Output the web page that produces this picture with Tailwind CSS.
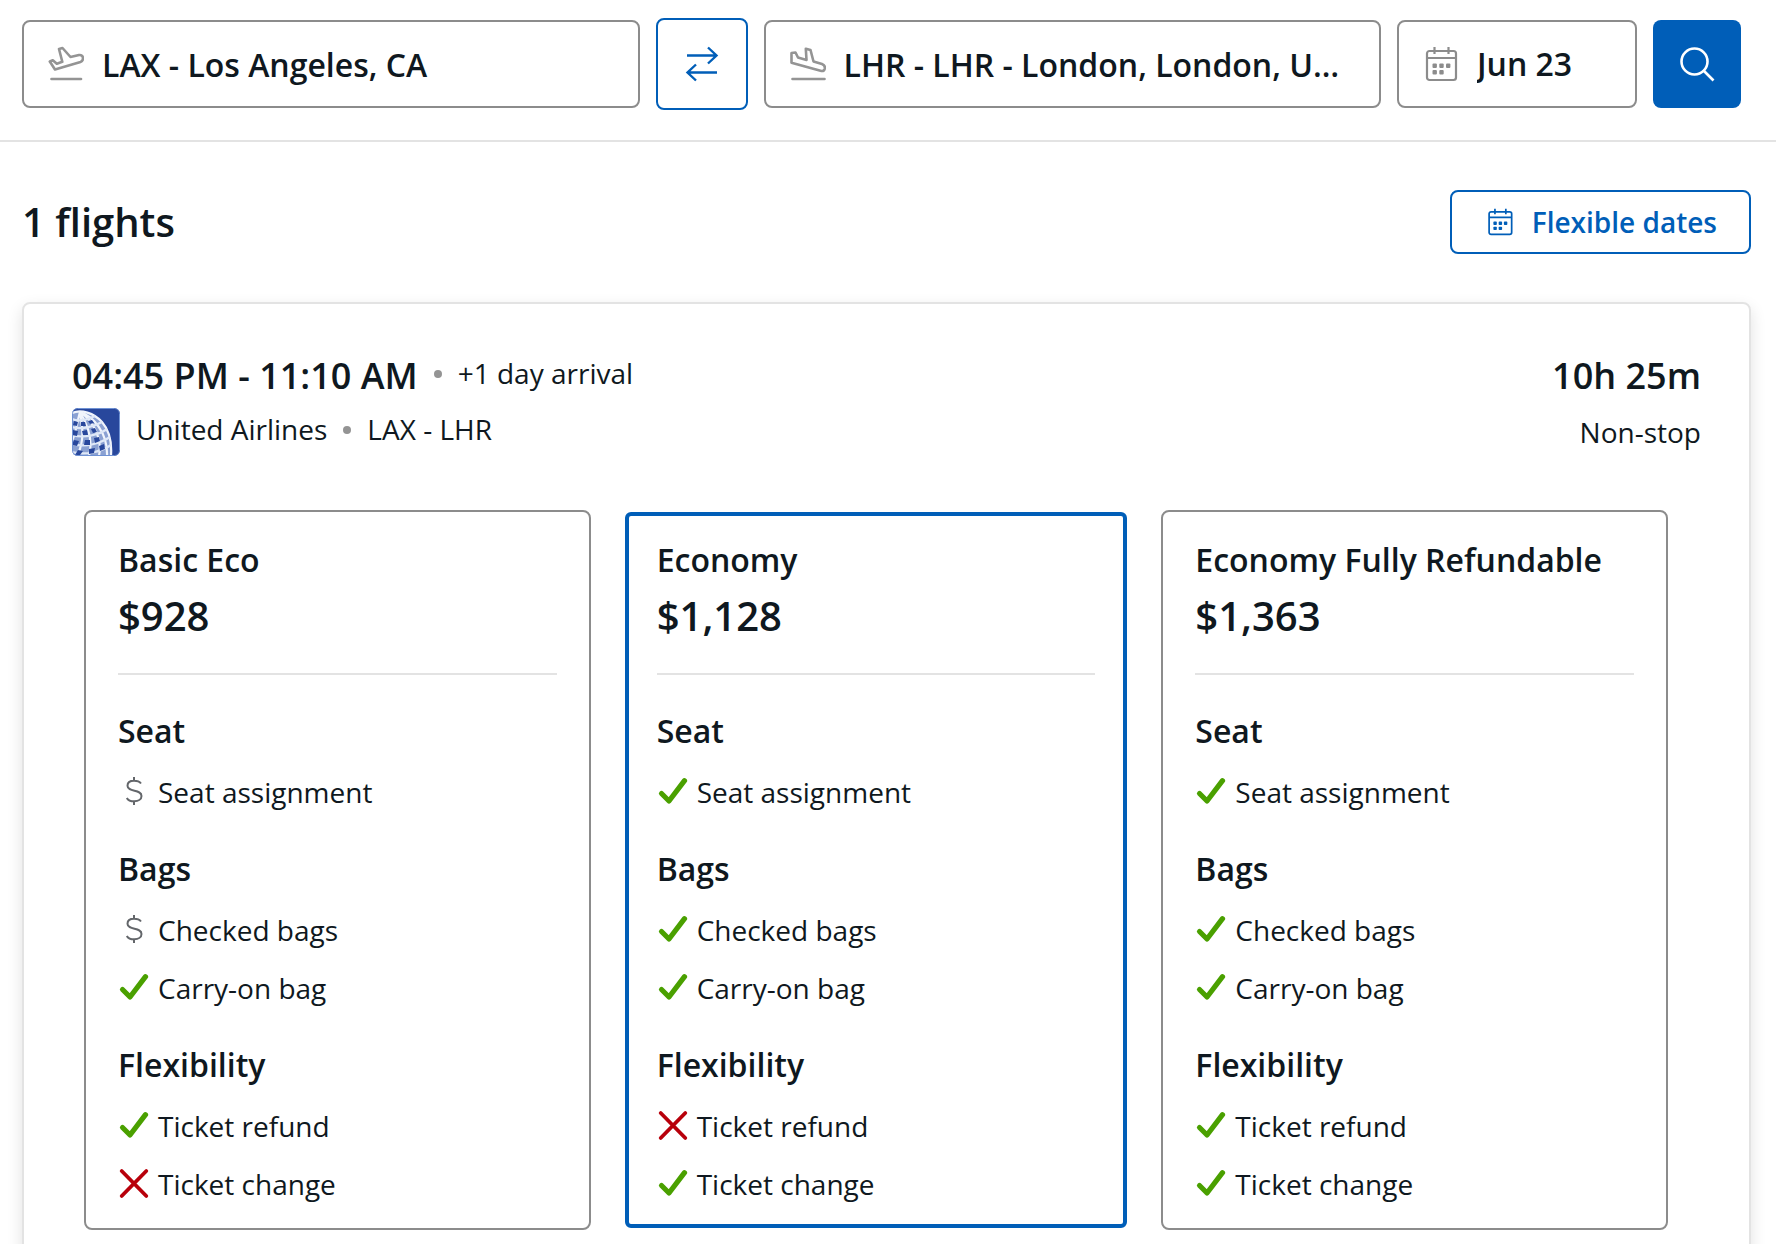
<!DOCTYPE html>
<html lang="en">
<head>
    <meta charset="UTF-8">
    <meta name="viewport" content="width=device-width, initial-scale=1.0">
    <title>Flight Search Results</title>
    <script src="https://cdn.jsdelivr.net/npm/@tailwindcss/browser@4"></script>
</head>
<body class="bg-white text-[#0f1820] text-[28px] font-['Open_Sans',sans-serif]">
    <!-- Icons -->
    <svg class="hidden" aria-hidden="true">
        <symbol id="check" viewBox="0 0 32 32">
            <path d="M4.500 17.500 12 25 27.500 4.700" fill="none" stroke="#4aa000" stroke-width="5.200" stroke-linecap="round" stroke-linejoin="round"/>
        </symbol>
        <symbol id="cross" viewBox="0 0 32 32">
            <path d="M3.700 3 28.300 28M28.300 3 3.700 28" fill="none" stroke="#b8000b" stroke-width="3.800" stroke-linecap="round"/>
        </symbol>
        <symbol id="dollar" viewBox="0 0 32 32">
            <path d="M16 1v4M16 25v4M23 7.500C21.500 5.500 19 4.800 16 4.800c-4 0-6.500 2-6.500 4.900 0 6.800 14 3.400 14 10.200 0 3.200-3 5.400-7.200 5.400-3.300 0-6.300-1.200-7.500-3.400" fill="none" stroke="#63666a" stroke-width="2"/>
        </symbol>
        <symbol id="calendar" viewBox="0 0 36 36">
            <g fill="none" stroke="currentColor" stroke-width="2.200">
                <rect x="4" y="5" width="29" height="29" rx="2.500"/>
                <path d="M4 12h29M11.500 1v7M25.500 1v7"/>
            </g>
            <g fill="currentColor">
                <rect x="9.500" y="17.500" width="4.400" height="4.400" rx="1"/>
                <rect x="16.300" y="17.500" width="4.400" height="4.400" rx="1"/>
                <rect x="23" y="17.500" width="4.400" height="4.400" rx="1"/>
                <rect x="9.500" y="24" width="4.400" height="4.400" rx="1"/>
                <rect x="16.300" y="24" width="4.400" height="4.400" rx="1"/>
            </g>
        </symbol>
    </svg>

    <!-- Search Bar -->
    <header class="border-b-2 border-[#e3e3e3]">
        <form class="flex items-center gap-4 pl-[22px] pr-[35px] pt-[18px] pb-[30px] text-[32px] font-semibold">
            <label class="flex flex-1 min-w-0 items-center gap-[18px] h-[88px] px-6 border-2 border-[#8c8c8c] rounded-lg">
                <svg class="w-9 h-9 shrink-0 text-[#949494]" viewBox="0 0 36 36" fill="none" stroke="currentColor" stroke-width="2.600" stroke-linecap="round" stroke-linejoin="round">
                    <path d="M11 3 14.500 2 22.500 11 31 9C33.500 8.700 35 10 35 12.300 35 14.200 34.500 15.200 32.500 15.900L7 23.500 1.800 15.500 4.800 14.300 8.800 17.800 14.300 15.800Z"/>
                    <path d="M3.500 33h29.500"/>
                </svg>
                <input type="text" aria-label="From" value="LAX - Los Angeles, CA" class="w-full min-w-0 pt-[2px] outline-none text-ellipsis">
            </label>
            <button type="button" aria-label="Swap airports" class="flex items-center justify-center w-[92px] h-[92px] border-2 border-[#005eb8] rounded-lg text-[#005eb8]">
                <svg class="w-9 h-9" viewBox="0 0 36 36" fill="none" stroke="currentColor" stroke-width="2.400">
                    <path d="M3 9.500h29.500M24 1.500l8.500 8-8.500 8M33 26.500H3.500M12 18.500l-8.500 8 8.500 8"/>
                </svg>
            </button>
            <label class="flex flex-1 min-w-0 items-center gap-[18px] h-[88px] px-6 border-2 border-[#8c8c8c] rounded-lg">
                <svg class="w-9 h-9 shrink-0 text-[#949494]" viewBox="0 0 36 36" fill="none" stroke="currentColor" stroke-width="2.600" stroke-linecap="round" stroke-linejoin="round">
                    <path d="M1.500 7 5.500 6.500 8 11.500 16.500 14 15.800 2.700 20.500 4 23.500 15.500 32 18C34.500 19 35.300 20.500 34.700 22.800 34 25 32.500 25.400 30.500 24.800L1.500 16.800Z"/>
                    <path d="M2.500 33h32"/>
                </svg>
                <input type="text" aria-label="To" value="LHR - LHR - London, London, United Kingdom" class="w-full min-w-0 pt-[2px] pr-3 outline-none text-ellipsis">
            </label>
            <label class="flex items-center gap-[18px] w-[240px] h-[88px] px-6 border-2 border-[#8c8c8c] rounded-lg">
                <svg class="w-9 h-9 shrink-0 text-[#8c8c8c]"><use href="#calendar"/></svg>
                <input type="text" aria-label="Departure date" value="Jun 23" class="w-full min-w-0 outline-none">
            </label>
            <button type="submit" aria-label="Search" class="flex items-center justify-center w-[88px] h-[88px] bg-[#005eb8] rounded-lg text-white">
                <svg class="w-9 h-9" viewBox="0 0 36 36" fill="none" stroke="currentColor" stroke-width="2.600">
                    <circle cx="15.500" cy="15.500" r="13"/>
                    <path d="M24.500 24.500 34.500 34.500"/>
                </svg>
            </button>
        </form>
    </header>

    <main class="pl-[22px] pr-[25px] py-12">
        <div class="flex items-center justify-between mb-12">
            <h1 class="text-[40px] font-semibold">1 flights</h1>
            <button type="button" class="flex items-center gap-4 h-16 px-8 border-2 border-[#005eb8] rounded-lg text-[#005eb8] font-semibold">
                <svg class="w-8 h-8 p-[2px]"><use href="#calendar"/></svg>
                Flexible dates
            </button>
        </div>

        <!-- Flight Card -->
        <article class="border-2 border-[#e3e3e3] rounded-lg shadow-[0_6px_16px_rgba(0,0,0,0.12)] px-12 pt-[46px] pb-12">
            <div class="flex justify-between">
                <div>
                    <div class="flex items-start gap-4">
                        <h2 class="text-[36px] leading-[52px] font-semibold">04:45 PM - 11:10 AM</h2>
                        <span class="w-2 h-2 mt-5 rounded-full bg-[#949494]"></span>
                        <span class="leading-[46px]">+1 day arrival</span>
                    </div>
                    <div class="flex items-start gap-4 mt-[6px]">
                        <svg class="w-12 h-12 rounded-md" viewBox="0 0 48 48" fill="none">
                            <rect width="48" height="48" fill="#28479c"/>
                            <path d="M0 5C9 1 22 5 30 14C37 22 40 34 39 48H0Z" fill="#8ba1d2"/>
                            <g stroke="#f1f5fc" stroke-width="2.200">
                                <path d="M0 5C9 1 22 5 30 14C37 22 40 34 39 48"/>
                                <path d="M8 4C21 8 36 25 35 48M8 4C18 10 31 28 27 48M8 4C14 14 22 30 17 48M8 4C10 17 13 31 6 46M8 4C5 14 4 25 0 33"/>
                            </g>
                            <g stroke="#dfe8f7" stroke-width="2.200">
                                <path d="M0 11C8 14 17 11 23 8M0 19C11 22 23 18 30 14M0 27C13 31 28 26 35 21M0 36C14 40 29 35 38 29M0 44C15 48 30 43 39 37"/>
                            </g>
                            <g fill="#28479c">
                                <path d="M2 13l4 1-1 4-4-1zM9 14l4 0 1 4-5 0zM16 13l4-1 2 3-4 1zM1 22l5 1-1 5-5-1zM10 23l5-1 1 5-5 0zM19 21l4-1 2 4-4 1zM2 32l5 1-2 5-5-1zM13 32l5 0 0 5-6 0zM22 30l5-1 1 4-5 2zM6 42l5 1-3 4-5 0zM17 41l6-1-1 5-5 1zM27 38l5-2 1 5-5 2z"/>
                            </g>
                            <rect x="0.500" y="0.500" width="47" height="47" rx="5" stroke="#6f92d4"/>
                        </svg>
                        <span class="leading-[42px]">United Airlines</span>
                        <span class="w-2 h-2 mt-[18px] rounded-full bg-[#949494]"></span>
                        <span class="leading-[42px]">LAX - LHR</span>
                    </div>
                </div>
                <div class="text-right">
                    <p class="text-[36px] leading-[52px] font-semibold">10h 25m</p>
                    <p class="mt-[6px] leading-[48px]">Non-stop</p>
                </div>
            </div>

            <!-- Fares -->
            <div class="grid grid-cols-3 gap-8 mt-[54px] ml-3 mr-[33px]">
                <section class="border-2 border-[#8c8c8c] rounded-lg px-8 pt-6 pb-[15px]">
                    <div class="pb-[25px] border-b-2 border-[#e3e3e3]">
                        <h3 class="text-[32px] leading-[48px] font-semibold">Basic Eco</h3>
                        <p class="text-[40px] leading-[64px] font-semibold">$928</p>
                    </div>
                    <h4 class="mt-8 mb-2 text-[32px] leading-[48px] font-semibold">Seat</h4>
                    <ul class="leading-[58px]">
                        <li class="flex items-center gap-2"><svg class="w-8 h-8"><use href="#dollar"/></svg>Seat assignment</li>
                    </ul>
                    <h4 class="mt-6 mb-2 text-[32px] leading-[48px] font-semibold">Bags</h4>
                    <ul class="leading-[58px]">
                        <li class="flex items-center gap-2"><svg class="w-8 h-8"><use href="#dollar"/></svg>Checked bags</li>
                        <li class="flex items-center gap-2"><svg class="w-8 h-8"><use href="#check"/></svg>Carry-on bag</li>
                    </ul>
                    <h4 class="mt-6 mb-2 text-[32px] leading-[48px] font-semibold">Flexibility</h4>
                    <ul class="leading-[58px]">
                        <li class="flex items-center gap-2"><svg class="w-8 h-8"><use href="#check"/></svg>Ticket refund</li>
                        <li class="flex items-center gap-2"><svg class="w-8 h-8"><use href="#cross"/></svg>Ticket change</li>
                    </ul>
                </section>

                <!-- Selected fare -->
                <section class="m-[2px] border-4 border-[#005eb8] rounded-md px-7 pt-5 pb-[11px]">
                    <div class="pb-[25px] border-b-2 border-[#e3e3e3]">
                        <h3 class="text-[32px] leading-[48px] font-semibold">Economy</h3>
                        <p class="text-[40px] leading-[64px] font-semibold">$1,128</p>
                    </div>
                    <h4 class="mt-8 mb-2 text-[32px] leading-[48px] font-semibold">Seat</h4>
                    <ul class="leading-[58px]">
                        <li class="flex items-center gap-2"><svg class="w-8 h-8"><use href="#check"/></svg>Seat assignment</li>
                    </ul>
                    <h4 class="mt-6 mb-2 text-[32px] leading-[48px] font-semibold">Bags</h4>
                    <ul class="leading-[58px]">
                        <li class="flex items-center gap-2"><svg class="w-8 h-8"><use href="#check"/></svg>Checked bags</li>
                        <li class="flex items-center gap-2"><svg class="w-8 h-8"><use href="#check"/></svg>Carry-on bag</li>
                    </ul>
                    <h4 class="mt-6 mb-2 text-[32px] leading-[48px] font-semibold">Flexibility</h4>
                    <ul class="leading-[58px]">
                        <li class="flex items-center gap-2"><svg class="w-8 h-8"><use href="#cross"/></svg>Ticket refund</li>
                        <li class="flex items-center gap-2"><svg class="w-8 h-8"><use href="#check"/></svg>Ticket change</li>
                    </ul>
                </section>

                <section class="border-2 border-[#8c8c8c] rounded-lg px-8 pt-6 pb-[15px]">
                    <div class="pb-[25px] border-b-2 border-[#e3e3e3]">
                        <h3 class="text-[32px] leading-[48px] font-semibold">Economy Fully Refundable</h3>
                        <p class="text-[40px] leading-[64px] font-semibold">$1,363</p>
                    </div>
                    <h4 class="mt-8 mb-2 text-[32px] leading-[48px] font-semibold">Seat</h4>
                    <ul class="leading-[58px]">
                        <li class="flex items-center gap-2"><svg class="w-8 h-8"><use href="#check"/></svg>Seat assignment</li>
                    </ul>
                    <h4 class="mt-6 mb-2 text-[32px] leading-[48px] font-semibold">Bags</h4>
                    <ul class="leading-[58px]">
                        <li class="flex items-center gap-2"><svg class="w-8 h-8"><use href="#check"/></svg>Checked bags</li>
                        <li class="flex items-center gap-2"><svg class="w-8 h-8"><use href="#check"/></svg>Carry-on bag</li>
                    </ul>
                    <h4 class="mt-6 mb-2 text-[32px] leading-[48px] font-semibold">Flexibility</h4>
                    <ul class="leading-[58px]">
                        <li class="flex items-center gap-2"><svg class="w-8 h-8"><use href="#check"/></svg>Ticket refund</li>
                        <li class="flex items-center gap-2"><svg class="w-8 h-8"><use href="#check"/></svg>Ticket change</li>
                    </ul>
                </section>
            </div>
        </article>
    </main>
</body>
</html>
